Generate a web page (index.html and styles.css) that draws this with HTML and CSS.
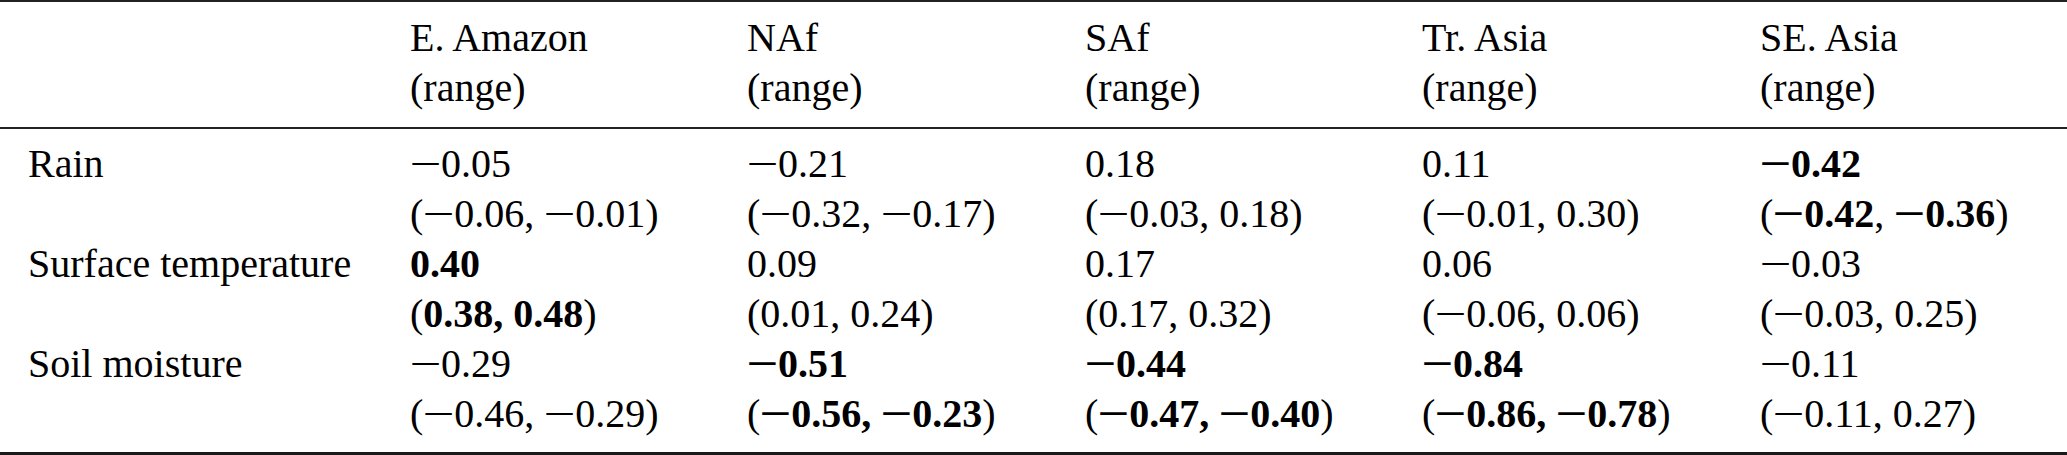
FILE: index.html
```html
<!DOCTYPE html>
<html>
<head>
<meta charset="utf-8">
<link rel="stylesheet" href="styles.css">
</head>
<body>
<div class="tbl">
  <div class="head row">
    <div class="cell"></div>
    <div class="cell"><div>E. Amazon</div><div>(range)</div></div>
    <div class="cell"><div>NAf</div><div>(range)</div></div>
    <div class="cell"><div>SAf</div><div>(range)</div></div>
    <div class="cell"><div>Tr. Asia</div><div>(range)</div></div>
    <div class="cell"><div>SE. Asia</div><div>(range)</div></div>
  </div>
  <div class="body">
    <div class="row">
      <div class="cell"><div>Rain</div></div>
      <div class="cell"><div><span class="m">−</span>0.05</div><div>(<span class="m">−</span>0.06, <span class="m">−</span>0.01)</div></div>
      <div class="cell"><div><span class="m">−</span>0.21</div><div>(<span class="m">−</span>0.32, <span class="m">−</span>0.17)</div></div>
      <div class="cell"><div>0.18</div><div>(<span class="m">−</span>0.03, 0.18)</div></div>
      <div class="cell"><div>0.11</div><div>(<span class="m">−</span>0.01, 0.30)</div></div>
      <div class="cell"><div class="b"><span class="m">−</span>0.42</div><div>(<b><span class="m">−</span>0.42</b>, <b><span class="m">−</span>0.36</b>)</div></div>
    </div>
    <div class="row">
      <div class="cell"><div>Surface temperature</div></div>
      <div class="cell"><div class="b">0.40</div><div>(<b>0.38, 0.48</b>)</div></div>
      <div class="cell"><div>0.09</div><div>(0.01, 0.24)</div></div>
      <div class="cell"><div>0.17</div><div>(0.17, 0.32)</div></div>
      <div class="cell"><div>0.06</div><div>(<span class="m">−</span>0.06, 0.06)</div></div>
      <div class="cell"><div><span class="m">−</span>0.03</div><div>(<span class="m">−</span>0.03, 0.25)</div></div>
    </div>
    <div class="row">
      <div class="cell"><div>Soil moisture</div></div>
      <div class="cell"><div><span class="m">−</span>0.29</div><div>(<span class="m">−</span>0.46, <span class="m">−</span>0.29)</div></div>
      <div class="cell"><div class="b"><span class="m">−</span>0.51</div><div>(<b><span class="m">−</span>0.56, <span class="m">−</span>0.23</b>)</div></div>
      <div class="cell"><div class="b"><span class="m">−</span>0.44</div><div>(<b><span class="m">−</span>0.47, <span class="m">−</span>0.40</b>)</div></div>
      <div class="cell"><div class="b"><span class="m">−</span>0.84</div><div>(<b><span class="m">−</span>0.86, <span class="m">−</span>0.78</b>)</div></div>
      <div class="cell"><div><span class="m">−</span>0.11</div><div>(<span class="m">−</span>0.11, 0.27)</div></div>
    </div>
  </div>
</div>
</body>
</html>
```

FILE: styles.css
```css
html, body {
  margin: 0;
  padding: 0;
  background: #fff;
}
.tbl {
  width: 2067px;
  font-family: "Liberation Serif", "Times New Roman", serif;
  font-size: 40px;
  line-height: 50px;
  color: #000;
  border-top: 2px solid #222;
  border-bottom: 3px solid #1a1a1a;
}
.row {
  display: grid;
  grid-template-columns: 410px 337px 338px 337px 338px 1fr;
}
.head {
  padding: 10.5px 0 14.5px;
  border-bottom: 2px solid #222;
}
.body {
  padding: 9.5px 0 13.5px;
}
.cell {
  white-space: nowrap;
}
.cell:first-child {
  padding-left: 28px;
}
.b, b {
  font-weight: bold;
}
.m {
  display: inline-block;
  width: 31px;
  text-align: center;
  transform: scaleX(1.42);
}
```
